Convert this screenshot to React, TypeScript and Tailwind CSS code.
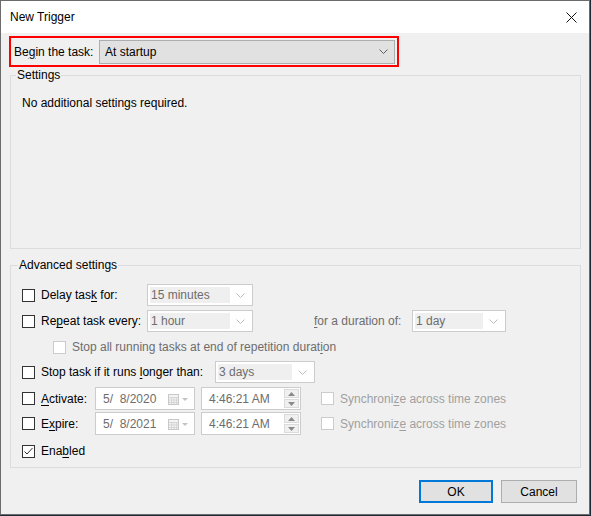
import React from 'react';

// little helpers for the Win10 look
function Chevron({ color = '#606060' }: { color?: string }) {
  return (
    <svg width="9" height="5" viewBox="0 0 9 5" className="shrink-0">
      <path d="M0.5 0.5 L4.5 4.5 L8.5 0.5" fill="none" stroke={color} strokeWidth="1" />
    </svg>
  );
}

function Checkbox({ checked = false, disabled = false }: { checked?: boolean; disabled?: boolean }) {
  return (
    <span
      className={
        'relative w-[13px] h-[13px] shrink-0 border bg-white ' +
        (disabled ? 'border-[#cccccc]' : 'border-[#333333]')
      }
    >
      {checked && (
        <svg width="11" height="11" viewBox="0 0 11 11" className="absolute left-0 top-0">
          <path d="M1.5 5.5 L4 8 L9.5 2" fill="none" stroke="#333" strokeWidth="1" />
        </svg>
      )}
    </span>
  );
}

function U({ children }: { children: React.ReactNode }) {
  return <span className="underline underline-offset-2 decoration-1">{children}</span>;
}

function Combo({ text, w }: { text: string; w: string }) {
  return (
    <div className={'h-[22px] border border-[#cccccc] bg-white p-[2px] flex items-center ' + w}>
      <span className="h-full flex-1 bg-[#efefef] text-[#6d6d6d] pl-[1px] leading-[16px]">{text}</span>
      <span className="w-[20px] flex justify-center">
        <Chevron color="#bdbdbd" />
      </span>
    </div>
  );
}

function DateBox({ text }: { text: string }) {
  return (
    <div className="h-[23px] w-[100px] border border-[#cccccc] bg-white flex items-center pl-[7px] pr-[4px] text-[#6d6d6d]">
      <span className="flex-1 whitespace-pre">{text}</span>
      <svg width="22" height="12" viewBox="0 0 22 12" className="shrink-0">
        <rect x="0.5" y="1.5" width="10" height="10" fill="#f4f4f4" stroke="#c8c8c8" />
        <path d="M1 4.5 H10 M1 7 H10 M1 9.5 H10 M3.5 4 V11 M6 4 V11 M8.5 4 V11" stroke="#d6d6d6" strokeWidth="1" />
        <path d="M14 5 L20 5 L17 8 Z" fill="#c4c4c4" />
      </svg>
    </div>
  );
}

function TimeBox() {
  return (
    <div className="h-[23px] w-[100px] border border-[#cccccc] bg-white flex items-center pl-[7px] pr-[1px] text-[#6d6d6d]">
      <span className="flex-1">4:46:21 AM</span>
      <div className="flex flex-col h-[19px] w-[15px] gap-[1px]">
        <span className="flex-1 bg-[#f0f0f0] border border-[#dadada] flex items-center justify-center">
          <svg width="7" height="4" viewBox="0 0 7 4"><path d="M0 4 L3.5 0 L7 4 Z" fill="#8a8a8a" /></svg>
        </span>
        <span className="flex-1 bg-[#f0f0f0] border border-[#dadada] flex items-center justify-center">
          <svg width="7" height="4" viewBox="0 0 7 4"><path d="M0 0 L7 0 L3.5 4 Z" fill="#8a8a8a" /></svg>
        </span>
      </div>
    </div>
  );
}

export default function App() {
  return (
    <div className="w-[591px] h-[516px] bg-[#1d2b36] font-['Liberation_Sans',sans-serif] text-[12px] text-black">
      <div className="w-[590px] h-[515px] border border-[#6b6b6b] bg-[#f0f0f0] flex flex-col">
        {/* title bar */}
        <div className="h-[32px] bg-white flex items-center justify-between pl-[9px] pr-[10px]">
          <span className="text-[12px]">New Trigger</span>
          <svg width="11" height="11" viewBox="0 0 11 11" className="mr-[2px]">
            <path d="M0.5 0.5 L10.5 10.5 M10.5 0.5 L0.5 10.5" stroke="#111" strokeWidth="1" />
          </svg>
        </div>

        <div className="flex flex-col px-[9px] pt-[3px]">
          {/* trigger type, boxed in red */}
          <div className="w-[390px] h-[31px] -ml-[1px] border-2 border-[#ff0000] flex items-center pl-[3px]">
            <span className="w-[85px]">
              Be<U>g</U>in the task:
            </span>
            <div className="h-[24px] w-[296px] border border-[#adadad] bg-[#e1e1e1] flex items-center justify-between pl-[5px] pr-[6px]">
              <span>At startup</span>
              <Chevron />
            </div>
          </div>

          <fieldset className="w-[571px] h-[181px] border border-[#dcdcdc] mt-[1px] pl-[11px]">
            <legend className="-ml-[6px] px-[1px] leading-[14px]">Settings</legend>
            <div className="pt-[12px]">No additional settings required.</div>
          </fieldset>

          <fieldset className="w-[571px] h-[210px] border border-[#dcdcdc] mt-[9px] pl-[11px]">
            <legend className="-ml-[4px] px-[1px] leading-[14px]">Advanced settings</legend>

            <div className="flex flex-col">
              <div className="h-[22px] mt-[12px] flex items-center">
                <Checkbox />
                <span className="w-[112px] pl-[6px]">
                  Delay tas<U>k</U> for:
                </span>
                <Combo text="15 minutes" w="w-[106px]" />
              </div>

              <div className="h-[22px] mt-[4px] flex items-center">
                <Checkbox />
                <span className="w-[112px] pl-[6px]">
                  Re<U>p</U>eat task every:
                </span>
                <Combo text="1 hour" w="w-[106px]" />
                <span className="ml-[61px] w-[98px] text-[#6d6d6d]">
                  <U>f</U>or a duration of:
                </span>
                <Combo text="1 day" w="w-[94px]" />
              </div>

              <div className="h-[16px] mt-[7px] flex items-center pl-[31px]">
                <Checkbox disabled />
                <span className="pl-[6px] text-[#6d6d6d]">
                  Stop all running tasks at end of repetition durat<U>i</U>on
                </span>
              </div>

              <div className="h-[22px] mt-[6px] flex items-center">
                <Checkbox />
                <span className="w-[180px] pl-[6px]">
                  Stop task if it runs <U>l</U>onger than:
                </span>
                <Combo text="3 days" w="w-[100px]" />
              </div>

              <div className="h-[23px] mt-[4px] flex items-center">
                <Checkbox />
                <span className="w-[60px] pl-[6px]">
                  <U>A</U>ctivate:
                </span>
                <DateBox text="5/  8/2020" />
                <span className="ml-[6px]">
                  <TimeBox />
                </span>
                <span className="ml-[20px] flex items-center">
                  <Checkbox disabled />
                  <span className="pl-[6px] text-[#a0a0a0]">
                    Synchroni<U>z</U>e across time zones
                  </span>
                </span>
              </div>

              <div className="h-[23px] mt-[2px] flex items-center">
                <Checkbox />
                <span className="w-[60px] pl-[6px]">
                  E<U>x</U>pire:
                </span>
                <DateBox text="5/  8/2021" />
                <span className="ml-[6px]">
                  <TimeBox />
                </span>
                <span className="ml-[20px] flex items-center">
                  <Checkbox disabled />
                  <span className="pl-[6px] text-[#a0a0a0]">
                    Synchroniz<U>e</U> across time zones
                  </span>
                </span>
              </div>

              <div className="h-[16px] mt-[8px] flex items-center">
                <Checkbox checked />
                <span className="pl-[6px]">
                  Ena<U>b</U>led
                </span>
              </div>
            </div>
          </fieldset>

          {/* dialog buttons */}
          <div className="flex justify-end gap-[8px] mt-[12px] pr-[3px]">
            <button className="w-[74px] h-[23px] border-2 border-[#0078d7] bg-[#e1e1e1]">OK</button>
            <button className="w-[76px] h-[23px] border border-[#adadad] bg-[#e1e1e1]">Cancel</button>
          </div>
        </div>
      </div>
    </div>
  );
}
